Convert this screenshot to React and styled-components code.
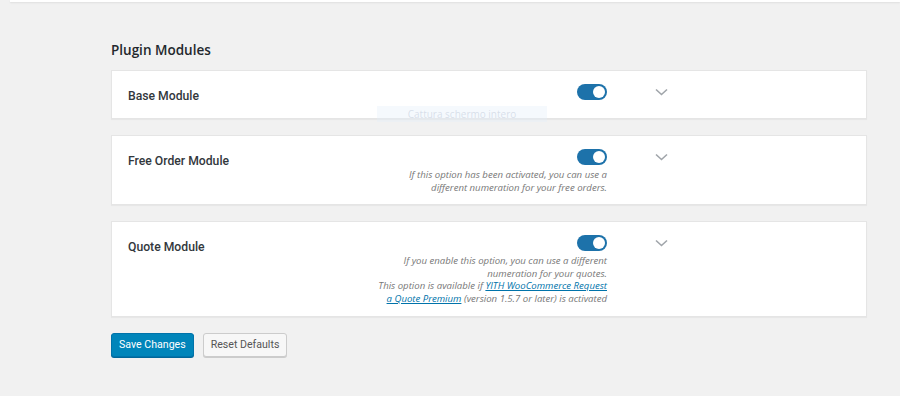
import styled, { createGlobalStyle } from "styled-components";

const GlobalStyle = createGlobalStyle`
  html, body {
    margin: 0;
    padding: 0;
    background: #f1f1f1;
    font-family: "Open Sans", "Noto Sans", sans-serif;
    color: #23282d;
  }
`;

// Barra superiore sottile
const TopBar = styled.div`
  height: 2px;
  margin-left: 10px;
  background: #fff;
  box-shadow: 0 1px 2px rgba(0,0,0,0.08);
`;

const Main = styled.div`
  position: relative;
  width: 756px;
  padding: 38px 0 40px 111px;
`;

const Heading = styled.h2`
  margin: 0 0 10px;
  font-size: 13.5px;
  line-height: 20px;
  font-weight: 600;
  color: #23282d;
`;

const Cards = styled.div`
  display: flex;
  flex-direction: column;
  gap: 16px;
`;

const Card = styled.div`
  display: flex;
  align-items: flex-start;
  background: #fff;
  border: 1px solid #e5e5e5;
  box-shadow: 0 1px 1px rgba(0,0,0,0.04);
  padding: 13px 17px 10px 16px;
`;

const Title = styled.div`
  flex: 0 0 210px;
  font-family: Roboto, "Open Sans", sans-serif;
  font-size: 12.2px;
  line-height: 24px;
  font-weight: 500;
  color: #32373c;
`;

const Control = styled.div`
  flex: 0 0 269px;
  display: flex;
  flex-direction: column;
  align-items: flex-end;
`;

const Toggle = styled.span`
  position: relative;
  width: 30px;
  height: 16px;
  border-radius: 8px;
  background: ${p => (p.$on ? "#1d72aa" : "#ccc")};

  &::after {
    content: "";
    position: absolute;
    top: 2px;
    left: ${p => (p.$on ? "16px" : "2px")};
    width: 12px;
    height: 12px;
    border-radius: 50%;
    background: #fff;
  }
`;

const Desc = styled.div`
  margin-top: 4px;
  font-size: 9.6px;
  line-height: 12.6px;
  font-style: italic;
  color: #777;
  text-align: right;
  white-space: nowrap;

  a {
    color: #0073aa;
    text-decoration: underline;
  }
`;

const Chevron = styled.div`
  margin-left: 48px;
  padding-top: 4px;
  display: flex;
`;

const Buttons = styled.div`
  display: flex;
  gap: 9px;
  margin-top: 16px;
`;

const Button = styled.button`
  height: 24px;
  padding: 0 7px;
  font-family: Roboto, "Open Sans", sans-serif;
  font-size: 10.6px;
  border-radius: 3px;
  cursor: pointer;
  border: 1px solid ${p => (p.$primary ? "#0073aa" : "#ccc")};
  background: ${p => (p.$primary ? "#0085ba" : "#f7f7f7")};
  color: ${p => (p.$primary ? "#fff" : "#555")};
  box-shadow: ${p => (p.$primary ? "0 1px 0 #006799" : "0 1px 0 #ccc")};
`;

// Residuo del tooltip nello screenshot
const Ghost = styled.div`
  position: absolute;
  left: 377px;
  top: 104px;
  width: 170px;
  height: 16px;
  background: rgba(226, 238, 250, 0.35);
  color: rgba(180, 190, 210, 0.45);
  font-size: 10px;
  line-height: 16px;
  text-align: center;
`;

const ChevronIcon = () => (
  <svg width="13" height="8" viewBox="0 0 13 8">
    <path d="M1 1.5 L6.5 6.5 L12 1.5" fill="none" stroke="#a0a5aa" strokeWidth="1.6" />
  </svg>
);

const modules = [
  { title: "Base Module" },
  {
    title: "Free Order Module",
    desc: (
      <>
        If this option has been activated, you can use a<br />
        different numeration for your free orders.
      </>
    ),
  },
  {
    title: "Quote Module",
    desc: (
      <>
        If you enable this option, you can use a different<br />
        numeration for your quotes.<br />
        This option is available if <a href="#">YITH WooCommerce Request</a>
        <br />
        <a href="#">a Quote Premium</a> (version 1.5.7 or later) is activated
      </>
    ),
  },
];

export default function App() {
  return (
    <>
      <GlobalStyle />
      <TopBar />
      <Main>
        <Heading>Plugin Modules</Heading>
        <Cards>
          {modules.map(m => (
            <Card key={m.title}>
              <Title>{m.title}</Title>
              <Control>
                <Toggle $on />
                {m.desc && <Desc>{m.desc}</Desc>}
              </Control>
              <Chevron>
                <ChevronIcon />
              </Chevron>
            </Card>
          ))}
        </Cards>
        <Buttons>
          <Button $primary>Save Changes</Button>
          <Button>Reset Defaults</Button>
        </Buttons>
        <Ghost>Cattura schermo intero</Ghost>
      </Main>
    </>
  );
}
